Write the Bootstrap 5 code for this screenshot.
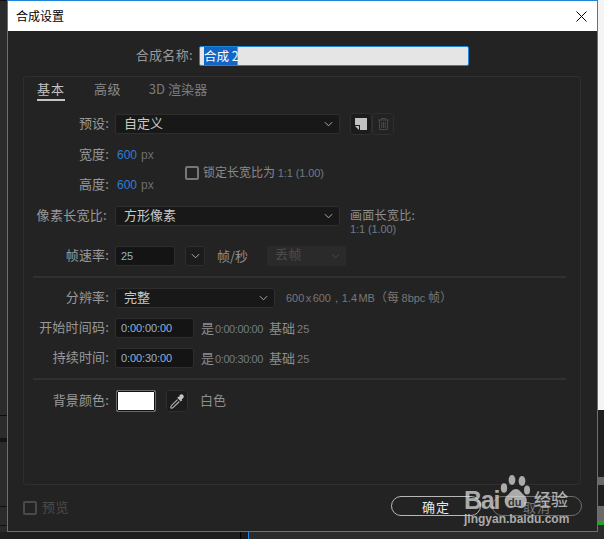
<!DOCTYPE html>
<html lang="zh">
<head>
<meta charset="utf-8">
<title>合成设置</title>
<link href="https://cdn.jsdelivr.net/npm/bootstrap@5.3.0/dist/css/bootstrap.min.css" rel="stylesheet">
<style>
html,body{height:100%;margin:0;overflow:hidden}
body{position:relative;background:#2a2a2a;font-family:"Noto Sans CJK SC","Liberation Sans",sans-serif;font-size:13px;color:#999;line-height:1.2}
.desk{position:absolute;inset:0;background:
 linear-gradient(#f4f4f4,#f4f4f4) 598px 0/6px 410px no-repeat,
 linear-gradient(#6a6a6a,#6a6a6a) 598px 477px/6px 8px no-repeat,
 linear-gradient(#6a6a6a,#6a6a6a) 598px 506px/6px 15px no-repeat,
 linear-gradient(#22a52c,#22a52c) 598px 521px/6px 4px no-repeat,
 linear-gradient(#1f1f1f,#1f1f1f) 598px 410px/6px 115px no-repeat,
 linear-gradient(#111,#111) 0 0/8px 1px no-repeat,
 linear-gradient(#0d0d0d,#0d0d0d) 0 415px/7px 1px no-repeat,
 linear-gradient(#141414,#141414) 0 438px/7px 4px no-repeat,
 linear-gradient(#111,#111) 0 506px/7px 1px no-repeat,
 linear-gradient(#111,#111) 0 525px/7px 1px no-repeat,
 linear-gradient(#1f1f1f,#1f1f1f) 0 532px/240px 7px no-repeat,
 linear-gradient(#000,#000) 240px 532px/1px 7px no-repeat,
 linear-gradient(#1b1b1b,#1b1b1b) 241px 532px/7px 7px no-repeat,
 linear-gradient(#2386dc,#2386dc) 248px 532px/1px 7px no-repeat,
 #2b2b2b}
.wnd{position:absolute;left:7px;top:0;width:591px;height:532px;border:1px solid #1f83d8;background:#232323;display:flex;flex-direction:column}
.ttl{height:30px;background:#fff;color:#000;font-size:12px;padding:0 10px 0 8px}
.namerow{margin-top:15px;height:20px}
.lb{width:185px;flex:none;text-align:right;white-space:nowrap;color:#999;padding-bottom:2px;letter-spacing:.35px}
.nm{margin-left:6px;width:270px;height:20px;background:#e5e5e5;border:1px solid #1f83d8;border-radius:2px;padding:0 0 0 4px;font-size:12.5px;line-height:18px;color:#fff}
.nm span{background:#1166c8;border-right:1px solid #e8772c;display:inline-block;height:18px;width:34px;white-space:nowrap}
.pnl{margin:10px 15px 0;width:558px;height:409px;border:1px solid #2f2f2f;border-radius:3px;flex:none}
.tabs{height:24px;padding-left:13px;gap:29px}
.tb{padding-top:4px;height:24px;color:#8a8a8a;white-space:nowrap;letter-spacing:.4px}
.tb.act{color:#c4c4c4;border-bottom:2px solid #c4c4c4;letter-spacing:1px}
.tb.thr{margin-left:-1px;letter-spacing:.05px;color:#7c7c7c}
.rw{height:20px;margin-top:10px}
.rw.gapbig{margin-top:20px}
.rw.gapmid{margin-top:11px}
.rw.first{margin-top:13px}
.lcol{width:85px;flex:none;text-align:right;letter-spacing:.15px;color:#999;white-space:nowrap;padding-bottom:2px}
.lcol2{width:85px;flex:none;text-align:right;letter-spacing:.3px;color:#999;white-space:nowrap;padding:0 2px 2px 0}
.lcol3{width:85px;flex:none;text-align:right;letter-spacing:.2px;color:#999;white-space:nowrap;padding-bottom:2px}
.ctl{margin-left:6px;flex:none}
.pick{height:20px;background-color:#181818;border:1px solid #2e2e2e;border-radius:3px;color:#c8c8c8;padding:0 0 0 8px;font-size:13px;line-height:16px;background-image:url("data:image/svg+xml,%3Csvg xmlns='http://www.w3.org/2000/svg' viewBox='0 0 10 6'%3E%3Cpath d='M1 1l4 4 4-4' fill='none' stroke='%23bbb' stroke-width='1'/%3E%3C/svg%3E");background-size:9px 6px;background-position:right 6px center;box-shadow:none}
.w225{width:225px}.w160{width:160px}
.w60{width:60px}.w79{width:79px}
.fld{height:20px;background:#141414;border:1px solid #2e2e2e;border-radius:3px;font-family:"Liberation Sans",sans-serif;font-size:11px;line-height:18px;padding:0 0 0 5px;color:#8fb3d6;letter-spacing:-.1px}
.sq{width:20px;height:20px;margin-left:10px;background:#1c1c1c;border:1px solid #2e2e2e;border-radius:3px;flex:none}
.dim{margin-left:19px;width:79px;height:20px;background:#2a2a2a;border-radius:2px;color:#4c4c4c;padding-left:8px;flex:none;letter-spacing:.5px;position:relative}
.dim svg{position:absolute;right:6px;top:7px}
.ibtn{width:22px;height:22px;border:1px solid #2e2e2e;border-radius:3px;background:#1c1c1c;flex:none}
.ibtn.off{background:transparent;margin-left:0}
.tool1{margin-left:10px;padding:4px 0 0 4px}
.blu{font-family:"Liberation Sans",sans-serif;font-size:12px;color:#2c7fd6;margin-left:8px}
.pxu{font-family:"Liberation Sans",sans-serif;font-size:12px;color:#6d6d6d;margin-left:4px}
.szblock{height:50px;margin-top:11px}
.szlines{width:106px;flex:none;gap:10px}
.szl{height:20px}
.lockwrap{margin:6px 0 0 55px}
.form-check-input.tick{width:14px;height:14px;margin:0;background-color:transparent;border:2px solid #777;border-radius:2px;flex:none;box-shadow:none}
.form-check-input.tick.faint{border-color:#4a4a4a}
.lockt{margin-left:4px;font-size:12px;color:#8a8a8a;white-space:nowrap}
.lockt b,.gry{font-weight:400;font-family:"Liberation Sans",sans-serif;font-size:11px;color:#6f7b86;letter-spacing:-.1px}
.asp{margin-left:10px;align-self:flex-start;padding-top:1px;white-space:nowrap;font-size:12px;line-height:15px;color:#8f8f8f;letter-spacing:.3px}
.asp .gry{display:block;letter-spacing:-.1px}
.sep{height:2px;background:#303030;margin:10px 14px 0 9px}
.meta{margin-left:11px;white-space:nowrap;color:#777;font-size:12px}
.meta i{font-style:normal;font-family:"Liberation Sans",sans-serif;font-size:11px;word-spacing:-1.5px;letter-spacing:-.05px}
.isw{margin-left:7px;white-space:nowrap;color:#8e8e8e}
.isw .gry{margin-left:1px;letter-spacing:-.4px}
.isw .bs{margin-left:6px}
.isw .num{font-family:"Liberation Sans",sans-serif;font-size:11px;color:#7b7b7b;margin-left:2px}
.wlabel{white-space:nowrap;color:#8e8e8e}
.bgrow{height:22px;margin-top:10px}
.swatch{width:40px;height:22px;margin-left:7px;background:#fff;border:1px solid #6b6b6b;outline:1px solid #111;outline-offset:-2px;border-radius:2px;flex:none}
.bgrow .ibtn{margin-left:10px}
.wname{margin-left:12px;color:#8e8e8e;padding-bottom:2px}
.foot{margin-top:11px;height:20px;padding:3px 15px 0}
.pvw{color:#4a4a4a;margin-left:5px;letter-spacing:.5px;padding-bottom:2px}
.pills{margin-top:-3px;gap:11px}
.pillb{width:90px;height:20px;padding:0;background:transparent;border:1px solid #b8b8b8;border-radius:10px;color:#e8e8e8;font-size:13px;line-height:17px;letter-spacing:1px}
.pillb.sec{border-color:#6e6e6e;color:#777}
.mark-w{position:absolute;left:464px;top:474px;width:110px;height:52px;color:rgba(225,225,225,.72);pointer-events:none}
.bai{position:absolute;left:0;top:11px;font:700 25px/30px "Liberation Sans",sans-serif;letter-spacing:-1.2px}
.jy{position:absolute;left:70px;top:15px;font-size:17px;line-height:20px;font-weight:500}
.pawdu{position:absolute;left:44px;top:22px;font:700 11px/13px "Liberation Sans",sans-serif;color:#333;z-index:2}
.pawi{position:absolute;left:32px;top:0}
.url{position:absolute;left:0;top:37px;font:700 12px/16px "Liberation Sans",sans-serif;white-space:nowrap}
</style>
</head>
<body>
<div class="desk"></div>
<div class="wnd">
  <div class="ttl d-flex align-items-center justify-content-between">
    <span>合成设置</span>
    <svg width="11" height="11" viewBox="0 0 11 11" aria-hidden="true"><path d="M.5.5l10 10M10.5.5l-10 10" stroke="#000" fill="none"/></svg>
  </div>
  <div class="namerow d-flex align-items-center">
    <span class="lb">合成名称:</span>
    <div class="nm"><span>合成 2</span></div>
  </div>
  <div class="pnl">
    <div class="tabs d-flex">
      <div class="tb act">基本</div>
      <div class="tb">高级</div>
      <div class="tb thr">3D 渲染器</div>
    </div>
    <div class="rw first d-flex align-items-center">
      <div class="lcol">预设:</div>
      <div class="ctl form-select pick w225">自定义</div>
      <div class="ibtn tool1 d-flex"><svg width="12" height="12" viewBox="0 0 12 12" aria-hidden="true"><path d="M0 0h12v12H5V7H0z" fill="#c2c2c2"/><path d="M0 8h4v4z" fill="#c2c2c2"/></svg></div>
      <div class="ibtn off d-flex align-items-center justify-content-center"><svg width="11" height="12" viewBox="0 0 11 12" aria-hidden="true"><path d="M0 2h11M3.5 2V.5h4V2M1.5 2v9.5h8V2M3.8 4v6M5.5 4v6M7.2 4v6" stroke="#484848" fill="none"/></svg></div>
    </div>
    <div class="szblock d-flex align-items-center">
      <div class="szlines d-flex flex-column">
        <div class="szl d-flex align-items-center"><div class="lcol">宽度:</div><span class="blu">600</span><span class="pxu">px</span></div>
        <div class="szl d-flex align-items-center"><div class="lcol">高度:</div><span class="blu">600</span><span class="pxu">px</span></div>
      </div>
      <div class="d-flex align-items-center lockwrap">
        <input class="form-check-input tick" type="checkbox" aria-label="锁定长宽比">
        <span class="lockt">锁定长宽比为 <b>1:1 (1.00)</b></span>
      </div>
    </div>
    <div class="rw gapmid d-flex align-items-center">
      <div class="lcol2">像素长宽比:</div>
      <div class="ctl form-select pick w225">方形像素</div>
      <div class="asp">画面长宽比:<span class="gry">1:1 (1.00)</span></div>
    </div>
    <div class="rw gapbig d-flex align-items-center">
      <div class="lcol">帧速率:</div>
      <div class="ctl fld w60">25</div>
      <div class="sq d-flex align-items-center justify-content-center"><svg width="9" height="6" viewBox="0 0 10 6" aria-hidden="true"><path d="M1 1l4 4 4-4" fill="none" stroke="#bbb"/></svg></div>
      <span class="ms-2 ps-1 wlabel">帧/秒</span>
      <div class="dim">丢帧<svg width="9" height="6" viewBox="0 0 10 6" aria-hidden="true"><path d="M1 1l4 4 4-4" fill="none" stroke="#4c4c4c"/></svg></div>
    </div>
    <div class="sep"></div>
    <div class="rw d-flex align-items-center">
      <div class="lcol">分辨率:</div>
      <div class="ctl form-select pick w160">完整</div>
      <span class="meta"><i>600 x 600，1.4 MB</i>（每 <i>8bpc</i> 帧）</span>
    </div>
    <div class="rw d-flex align-items-center">
      <div class="lcol3">开始时间码:</div>
      <div class="ctl fld w79">0:00:00:00</div>
      <span class="isw">是<span class="gry">0:00:00:00</span><span class="bs">基础</span><span class="num">25</span></span>
    </div>
    <div class="rw d-flex align-items-center">
      <div class="lcol">持续时间:</div>
      <div class="ctl fld w79">0:00:30:00</div>
      <span class="isw">是<span class="gry">0:00:30:00</span><span class="bs">基础</span><span class="num">25</span></span>
    </div>
    <div class="sep"></div>
    <div class="bgrow d-flex align-items-center">
      <div class="lcol">背景颜色:</div>
      <div class="swatch"></div>
      <div class="ibtn d-flex align-items-center justify-content-center"><svg width="17" height="17" viewBox="0 0 16 16" aria-hidden="true"><path d="M10 2.2c1-1.4 2.6-1 3.3-.3s1 2.2-.3 3.2l-1.2 1 .6.7-1.2 1.1-3.4-3.4 1.1-1.2.7.6z" fill="#c6c6c6"/><path d="M8 6.2 2.6 11.6c-.7.7-1 1.6-1 2.2l.5.5c.7 0 1.5-.3 2.2-1L9.7 8" fill="none" stroke="#b5b5b5"/></svg></div>
      <span class="wname">白色</span>
    </div>
  </div>
  <div class="foot d-flex justify-content-between">
    <div class="d-flex align-items-center align-self-start">
      <input class="form-check-input tick faint" type="checkbox" aria-label="预览">
      <span class="pvw">预览</span>
    </div>
    <div class="pills d-flex">
      <button type="button" class="btn pillb">确定</button>
      <button type="button" class="btn pillb sec">取消</button>
    </div>
  </div>
</div>
<div class="mark-w">
  <span class="bai">Bai</span>
  <svg class="pawi" width="36" height="37" viewBox="0 0 36 37" aria-hidden="true"><g fill="rgba(225,225,225,.72)"><ellipse cx="8" cy="14" rx="3.2" ry="4.8"/><ellipse cx="16" cy="6" rx="3.4" ry="5"/><ellipse cx="26" cy="7" rx="3.4" ry="5"/><ellipse cx="31" cy="16" rx="3" ry="4.5"/><path d="M20 15c4 0 5 4 9 7 4 4 1 13-5 12-2-.4-2.500-1-4-1s-2.500.6-4.500 1c-6 1-9-8-5-12 4-3 5.500-7 9.500-7z"/></g></svg>
  <span class="pawdu">du</span>
  <span class="jy">经验</span>
  <span class="url">jingyan.baidu.com</span>
</div>
<script src="https://cdn.jsdelivr.net/npm/bootstrap@5.3.0/dist/js/bootstrap.bundle.min.js"></script>
</body>
</html>
